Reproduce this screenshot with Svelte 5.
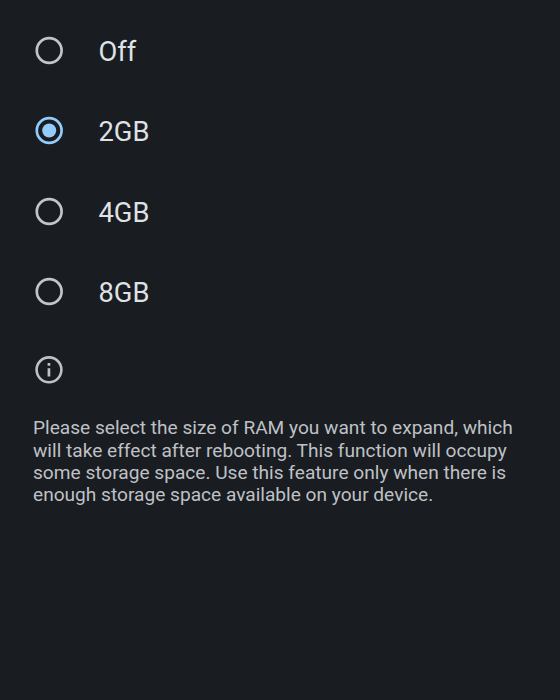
<script lang="ts">
  const options = ['Off', '2GB', '4GB', '8GB'];
  let selected = $state('2GB');
</script>

<main class="screen">
  <div class="options" role="radiogroup" aria-label="RAM expansion">
    {#each options as option}
      <button class="option" class:checked={selected === option} role="radio" aria-checked={selected === option} onclick={() => (selected = option)}>
        <svg class="radio" width="32" height="32" viewBox="0 0 32 32" fill="none" aria-hidden="true">
          <circle cx="16.2" cy="15.5" r="12.4" stroke="currentColor" stroke-width="2.7" />
          {#if selected === option}
            <circle cx="16.2" cy="15.5" r="7" fill="currentColor" />
          {/if}
        </svg>
        <span class="label">{option}</span>
      </button>
    {/each}
  </div>

  <footer class="footer">
    <svg class="info" width="32" height="32" viewBox="0 0 32 32" fill="none" aria-hidden="true">
      <circle cx="16" cy="15.8" r="12.4" stroke="currentColor" stroke-width="2.6" />
      <path d="M14.6 9h2.7v2.7h-2.7zM14.6 14.3h2.7v8.2h-2.7z" fill="currentColor" />
    </svg>
    <p class="summary">Please select the size of RAM you want to expand, which will take effect after rebooting. This function will occupy some storage space. Use this feature only when there is enough storage space available on your device.</p>
  </footer>
</main>

<style>
  :global(body) { background: #191c20; }

  .screen {
    min-height: 700px;
    box-sizing: border-box;
    padding: 11px 33px 0;
    background: #191c20;
    color: #dfe1e5;
    font-family: Roboto, sans-serif;
  }

  .options { display: flex; flex-direction: column; }

  .option {
    display: flex; align-items: center; gap: 33.5px;
    height: 80.3px; padding: 0;
    background: none; border: none;
    color: inherit; font: inherit; text-align: left;
    cursor: pointer;
  }

  .radio { flex: none; color: #c1c4c9; }
  .checked .radio { color: #93cbfa; }

  .label { padding-top: 2px; font-size: 27.3px; line-height: 32px; }

  .footer { padding-top: 22px; color: #bfc1c6; }
  .info { display: block; }

  .summary {
    width: 494px;
    margin: 31px 0 0;
    font-size: 19.12px; line-height: 22.4px;
  }
</style>
